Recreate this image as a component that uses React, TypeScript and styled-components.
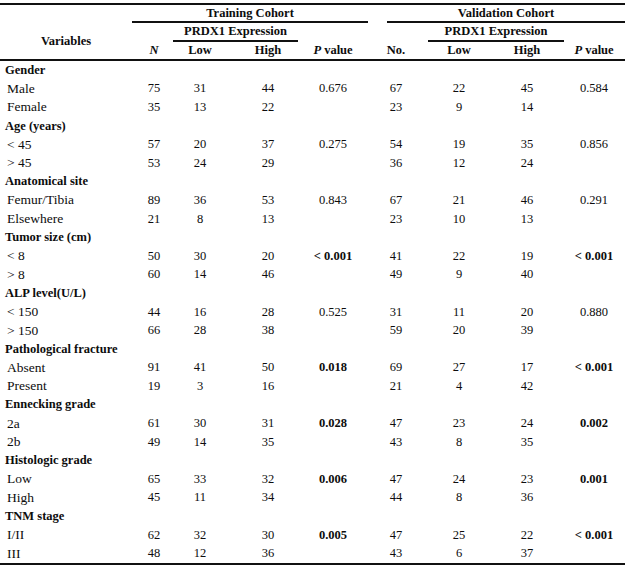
import styled, { createGlobalStyle } from "styled-components";

type Stat = { label: string; t: string[]; v: string[] };
type Group = {
    title: string;
    rows: Stat[];
    pTrain: string;
    pValid: string;
    boldTrain?: boolean;
    boldValid?: boolean;
};

const groups: Group[] = [
    {
        title: "Gender",
        rows: [
            {label: "Male", t: ["75", "31", "44"], v: ["67", "22", "45"]},
            {label: "Female", t: ["35", "13", "22"], v: ["23", "9", "14"]},
        ],
        pTrain: "0.676",
        pValid: "0.584",
    },
    {
        title: "Age (years)",
        rows: [
            {label: "< 45", t: ["57", "20", "37"], v: ["54", "19", "35"]},
            {label: "> 45", t: ["53", "24", "29"], v: ["36", "12", "24"]},
        ],
        pTrain: "0.275",
        pValid: "0.856",
    },
    {
        title: "Anatomical site",
        rows: [
            {label: "Femur/Tibia", t: ["89", "36", "53"], v: ["67", "21", "46"]},
            {label: "Elsewhere", t: ["21", "8", "13"], v: ["23", "10", "13"]},
        ],
        pTrain: "0.843",
        pValid: "0.291",
    },
    {
        title: "Tumor size (cm)",
        rows: [
            {label: "< 8", t: ["50", "30", "20"], v: ["41", "22", "19"]},
            {label: "> 8", t: ["60", "14", "46"], v: ["49", "9", "40"]},
        ],
        pTrain: "< 0.001",
        pValid: "< 0.001",
        boldTrain: true,
        boldValid: true,
    },
    {
        title: "ALP level(U/L)",
        rows: [
            {label: "< 150", t: ["44", "16", "28"], v: ["31", "11", "20"]},
            {label: "> 150", t: ["66", "28", "38"], v: ["59", "20", "39"]},
        ],
        pTrain: "0.525",
        pValid: "0.880",
    },
    {
        title: "Pathological fracture",
        rows: [
            {label: "Absent", t: ["91", "41", "50"], v: ["69", "27", "17"]},
            {label: "Present", t: ["19", "3", "16"], v: ["21", "4", "42"]},
        ],
        pTrain: "0.018",
        pValid: "< 0.001",
        boldTrain: true,
        boldValid: true,
    },
    {
        title: "Ennecking grade",
        rows: [
            {label: "2a", t: ["61", "30", "31"], v: ["47", "23", "24"]},
            {label: "2b", t: ["49", "14", "35"], v: ["43", "8", "35"]},
        ],
        pTrain: "0.028",
        pValid: "0.002",
        boldTrain: true,
        boldValid: true,
    },
    {
        title: "Histologic grade",
        rows: [
            {label: "Low", t: ["65", "33", "32"], v: ["47", "24", "23"]},
            {label: "High", t: ["45", "11", "34"], v: ["44", "8", "36"]},
        ],
        pTrain: "0.006",
        pValid: "0.001",
        boldTrain: true,
        boldValid: true,
    },
    {
        title: "TNM stage",
        rows: [
            {label: "I/II", t: ["62", "32", "30"], v: ["47", "25", "22"]},
            {label: "III", t: ["48", "12", "36"], v: ["43", "6", "37"]},
        ],
        pTrain: "0.005",
        pValid: "< 0.001",
        boldTrain: true,
        boldValid: true,
    },
];

export default function App() {
    return (
        <>
            <GlobalStyle/>
            <Table>
                <Head>
                    <Spanner $col="2 / 6" $ml={0} $mr={-14}>Training Cohort</Spanner>
                    <Spanner $col="6 / 11" $ml={33} $mr={0}>Validation Cohort</Spanner>

                    <VarHead>Variables</VarHead>
                    <SubSpanner $col="3 / 5" $ml={-3} $mr={14}>PRDX1 Expression</SubSpanner>
                    <SubSpanner $col="7 / 9" $ml={-10} $mr={10}>PRDX1 Expression</SubSpanner>

                    <HeadCell $col={2}><i>N</i></HeadCell>
                    <HeadCell $col={3}>Low</HeadCell>
                    <HeadCell $col={4}>High</HeadCell>
                    <HeadCell $col={5}><i>P</i>&nbsp;value</HeadCell>
                    <HeadCell $col={6}>No.</HeadCell>
                    <HeadCell $col={7}>Low</HeadCell>
                    <HeadCell $col={8}>High</HeadCell>
                    <HeadCell $col={9}><i>P</i>&nbsp;value</HeadCell>
                </Head>

                <Body>
                    {groups.map((g) => (
                        <div key={g.title}>
                            <Row>
                                <GroupTitle>{g.title}</GroupTitle>
                            </Row>
                            {g.rows.map((r, i) => (
                                <Row key={r.label}>
                                    <Label>{r.label}</Label>
                                    {r.t.map((n, k) => <Cell key={"t" + k}>{n}</Cell>)}
                                    <Cell $bold={g.boldTrain}>{i === 0 ? g.pTrain : ""}</Cell>
                                    {r.v.map((n, k) => <Cell key={"v" + k}>{n}</Cell>)}
                                    <Cell $bold={g.boldValid}>{i === 0 ? g.pValid : ""}</Cell>
                                </Row>
                            ))}
                        </div>
                    ))}
                </Body>
            </Table>
        </>
    );
}

const GlobalStyle = createGlobalStyle`
  html, body {
    margin: 0;
    background: #ffffff;
  }
`

const columns = "132px 44px 48px 88px 42px 84px 42px 94px 40px 1fr";

const Table = styled.div`
  width: 625px;
  padding-top: 3px;
  font-family: "Liberation Serif", "Times New Roman", serif;
  font-size: 12.5px;
  color: #0d0d0d;
`

const Head = styled.div`
  display: grid;
  grid-template-columns: ${columns};
  grid-template-rows: 18px 19px 17px;
  border-top: 2px solid #111;
  border-bottom: 2px solid #111;
  font-weight: 700;
`

const Spanner = styled.div<{ $col: string; $ml: number; $mr: number }>`
  grid-row: 1;
  grid-column: ${p => p.$col};
  margin-left: ${p => p.$ml}px;
  margin-right: ${p => p.$mr}px;
  display: flex;
  align-items: center;
  justify-content: center;
  border-bottom: 2px solid #111;
  white-space: nowrap;
`

const SubSpanner = styled(Spanner)`
  grid-row: 2;
`

const VarHead = styled.div`
  grid-row: 2 / 4;
  grid-column: 1;
  display: flex;
  align-items: center;
  justify-content: center;
`

const HeadCell = styled.div<{ $col: number }>`
  grid-row: 3;
  grid-column: ${p => p.$col};
  display: flex;
  align-items: center;
  justify-content: center;
  white-space: nowrap;
`

const Body = styled.div`
  border-bottom: 2px solid #111;
`

const Row = styled.div`
  display: grid;
  grid-template-columns: ${columns};
  height: 18.6px;
  align-items: center;
`

const GroupTitle = styled.div`
  grid-column: 1 / 4;
  padding-left: 5px;
  font-weight: 700;
  white-space: nowrap;
`

const Label = styled.div`
  padding-left: 7px;
  font-size: 13.5px;
  white-space: nowrap;
`

const Cell = styled.div<{ $bold?: boolean }>`
  display: flex;
  justify-content: center;
  white-space: nowrap;
  font-weight: ${p => (p.$bold ? 700 : 400)};
`
